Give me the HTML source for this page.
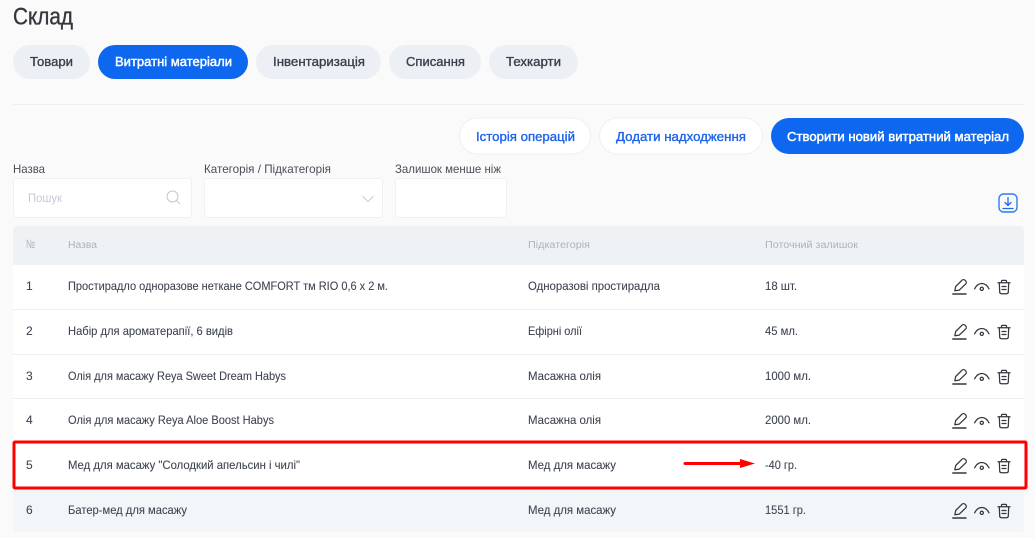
<!DOCTYPE html>
<html lang="uk"><head><meta charset="utf-8"><title>Склад</title>
<style>
html,body{margin:0;padding:0;width:1035px;height:538px;overflow:hidden;background:#fafafa}
svg{display:block}
text{font-family:"Liberation Sans",sans-serif;white-space:pre}
.t{font-size:12px;fill:#3e4350;stroke:#3e4350;stroke-width:.08}
.h{font-size:10px;fill:#aeb2ba}
.l{font-size:12px;fill:#4a4e59}
.m{font-size:13px;fill:#3a3f4b;stroke:#3a3f4b;stroke-width:.35}
.w{font-size:13px;fill:#fff;stroke:#fff;stroke-width:.45}
.b{font-size:13px;fill:#1c62ea;stroke:#1c62ea;stroke-width:.35}
.i{fill:none;stroke:#33373f;stroke-width:1.25;stroke-linecap:round;stroke-linejoin:round}
</style></head><body>
<svg width="1035" height="538" viewBox="0 0 1035 538" xmlns="http://www.w3.org/2000/svg">
<defs>
<g id="ic" class="i">
<path d="M954.8 290.8l.9-4.3 6.3-6.3c.8-.8 2.2-.8 3 0l.7.7c.8.8.8 2.2 0 3l-6.4 6.2z"/>
<path d="M952.8 294h13.2" stroke-width="1.4"/>
<path d="M974.6 288.8c3.8-7 10.6-7 14.4 0"/>
<circle cx="981.8" cy="288.8" r="1.6"/>
<path d="M998 282.8h12M1001.5 282.5v-1.2c0-.5.4-.9.9-.9h3.2c.5 0 .9.4.9.9v1.2M999.3 282.8l.4 9.2c0 1 .7 1.7 1.7 1.7h5.2c1 0 1.7-.7 1.7-1.7l.4-9.2M1002 286.5h4M1002 289.5h4"/>
</g>
</defs>

<text x="13" y="24.5" font-size="24" fill="#33363d" stroke="#33363d" stroke-width=".35" textLength="60" lengthAdjust="spacingAndGlyphs">Склад</text>

<rect x="13" y="45" width="77" height="34" rx="17" fill="#ecf0f4"/>
<rect x="98" y="45" width="150" height="34" rx="17" fill="#0e68ef"/>
<rect x="256" y="45" width="125" height="34" rx="17" fill="#ecf0f4"/>
<rect x="389" y="45" width="92" height="34" rx="17" fill="#ecf0f4"/>
<rect x="489" y="45" width="89" height="34" rx="17" fill="#ecf0f4"/>
<text class="m" x="30" y="66" textLength="43" lengthAdjust="spacingAndGlyphs">Товари</text>
<text class="w" x="115" y="66" textLength="117" lengthAdjust="spacingAndGlyphs">Витратні матеріали</text>
<text class="m" x="273" y="66" textLength="92" lengthAdjust="spacingAndGlyphs">Інвентаризація</text>
<text class="m" x="406" y="66" textLength="59" lengthAdjust="spacingAndGlyphs">Списання</text>
<text class="m" x="506" y="66" textLength="55" lengthAdjust="spacingAndGlyphs">Техкарти</text>

<rect x="13" y="104" width="1011" height="1" fill="#eeeff1"/>

<rect x="459.5" y="118" width="131" height="36" rx="18" fill="#fff" stroke="#eef0f3"/>
<rect x="599.5" y="118" width="163" height="36" rx="18" fill="#fff" stroke="#eef0f3"/>
<rect x="771" y="118" width="253" height="36" rx="18" fill="#0e68ef"/>
<text class="b" x="476" y="141" textLength="99" lengthAdjust="spacingAndGlyphs">Історія операцій</text>
<text class="b" x="616" y="141" textLength="130" lengthAdjust="spacingAndGlyphs">Додати надходження</text>
<text class="w" x="787" y="141" textLength="222" lengthAdjust="spacingAndGlyphs">Створити новий витратний матеріал</text>

<text class="l" x="13" y="173" textLength="32" lengthAdjust="spacingAndGlyphs">Назва</text>
<text class="l" x="204" y="173" textLength="127" lengthAdjust="spacingAndGlyphs">Категорія / Підкатегорія</text>
<text class="l" x="395" y="173" textLength="106" lengthAdjust="spacingAndGlyphs">Залишок менше ніж</text>
<rect x="13.5" y="178.5" width="178" height="39" rx="3" fill="#fff" stroke="#f0f1f4"/>
<rect x="204.5" y="178.5" width="178" height="39" rx="3" fill="#fff" stroke="#f0f1f4"/>
<rect x="395.5" y="178.5" width="111" height="39" rx="3" fill="#fff" stroke="#f0f1f4"/>
<text x="28" y="202" font-size="12" fill="#c6cad6" textLength="34" lengthAdjust="spacingAndGlyphs">Пошук</text>
<circle cx="172.5" cy="196.5" r="5.5" fill="none" stroke="#c3c7d2" stroke-width="1"/>
<path d="M176.5 200.5l3.5 3.5" stroke="#c3c7d2" fill="none"/>
<path d="M362.5 196l5.5 5.5 5.5-5.5" stroke="#c9cdd6" fill="none"/>

<rect x="999" y="194" width="18" height="18" rx="4.5" fill="none" stroke="#2f7bf0" stroke-width="1.4"/>
<path d="M1008 197.5v7.5M1005 202.5l3 3 3-3M1003 208.5h10" stroke="#1f6ce8" stroke-width="1.3" fill="none" stroke-linecap="round" stroke-linejoin="round"/>

<path d="M13 230a4 4 0 0 1 4-4h1003a4 4 0 0 1 4 4v35H13z" fill="#eff2f5"/>
<text class="h" x="26" y="248" font-size="12" style="font-size:12px" textLength="9" lengthAdjust="spacingAndGlyphs">№</text>
<text class="h" x="68" y="248" textLength="29" lengthAdjust="spacingAndGlyphs">Назва</text>
<text class="h" x="528" y="248" textLength="62" lengthAdjust="spacingAndGlyphs">Підкатегорія</text>
<text class="h" x="765" y="248" textLength="93" lengthAdjust="spacingAndGlyphs">Поточний залишок</text>

<rect x="13" y="265" width="1011" height="224" fill="#fff"/>
<rect x="13" y="309" width="1011" height="1" fill="#eeeef4"/>
<rect x="13" y="354" width="1011" height="1" fill="#eeeef4"/>
<rect x="13" y="398" width="1011" height="1" fill="#eeeef4"/>
<path d="M13 489h1011v39a4 4 0 0 1-4 4H17a4 4 0 0 1-4-4z" fill="#f2f6f9"/>

<text class="t" x="26" y="290">1</text>
<text class="t" x="68" y="290" textLength="320" lengthAdjust="spacingAndGlyphs">Простирадло одноразове неткане COMFORT тм RIO 0,6 х 2 м.</text>
<text class="t" x="528" y="290" textLength="132" lengthAdjust="spacingAndGlyphs">Одноразові простирадла</text>
<text class="t" x="765" y="290" textLength="32" lengthAdjust="spacingAndGlyphs">18 шт.</text>

<text class="t" x="26" y="335">2</text>
<text class="t" x="68" y="335" textLength="165" lengthAdjust="spacingAndGlyphs">Набір для ароматерапії, 6 видів</text>
<text class="t" x="528" y="335" textLength="54" lengthAdjust="spacingAndGlyphs">Ефірні олії</text>
<text class="t" x="765" y="335" textLength="33" lengthAdjust="spacingAndGlyphs">45 мл.</text>

<text class="t" x="26" y="380">3</text>
<text class="t" x="68" y="380" textLength="218" lengthAdjust="spacingAndGlyphs">Олія для масажу Reya Sweet Dream Habys</text>
<text class="t" x="528" y="380" textLength="73" lengthAdjust="spacingAndGlyphs">Масажна олія</text>
<text class="t" x="765" y="380" textLength="46" lengthAdjust="spacingAndGlyphs">1000 мл.</text>

<text class="t" x="26" y="424">4</text>
<text class="t" x="68" y="424" textLength="206" lengthAdjust="spacingAndGlyphs">Олія для масажу Reya Aloe Boost Habys</text>
<text class="t" x="528" y="424" textLength="73" lengthAdjust="spacingAndGlyphs">Масажна олія</text>
<text class="t" x="765" y="424" textLength="46" lengthAdjust="spacingAndGlyphs">2000 мл.</text>

<text class="t" x="26" y="469">5</text>
<text class="t" x="68" y="469" textLength="232" lengthAdjust="spacingAndGlyphs">Мед для масажу "Солодкий апельсин і чилі"</text>
<text class="t" x="528" y="469" textLength="88" lengthAdjust="spacingAndGlyphs">Мед для масажу</text>
<text class="t" x="765" y="469" textLength="32" lengthAdjust="spacingAndGlyphs">-40 гр.</text>

<text class="t" x="26" y="514">6</text>
<text class="t" x="68" y="514" textLength="119" lengthAdjust="spacingAndGlyphs">Батер-мед для масажу</text>
<text class="t" x="528" y="514" textLength="88" lengthAdjust="spacingAndGlyphs">Мед для масажу</text>
<text class="t" x="765" y="514" textLength="41" lengthAdjust="spacingAndGlyphs">1551 гр.</text>

<use href="#ic"/>
<use href="#ic" y="45"/>
<use href="#ic" y="90"/>
<use href="#ic" y="134"/>
<use href="#ic" y="179"/>
<use href="#ic" y="224"/>

<rect x="14" y="442" width="1012" height="46" rx="1" fill="none" stroke="#fe0000" stroke-width="3"/>
<path d="M685 462h55v-3l15 4.5-15 4.5v-3h-55a1.5 1.5 0 0 1 0-3z" fill="#fe0000"/>
</svg>
</body></html>
